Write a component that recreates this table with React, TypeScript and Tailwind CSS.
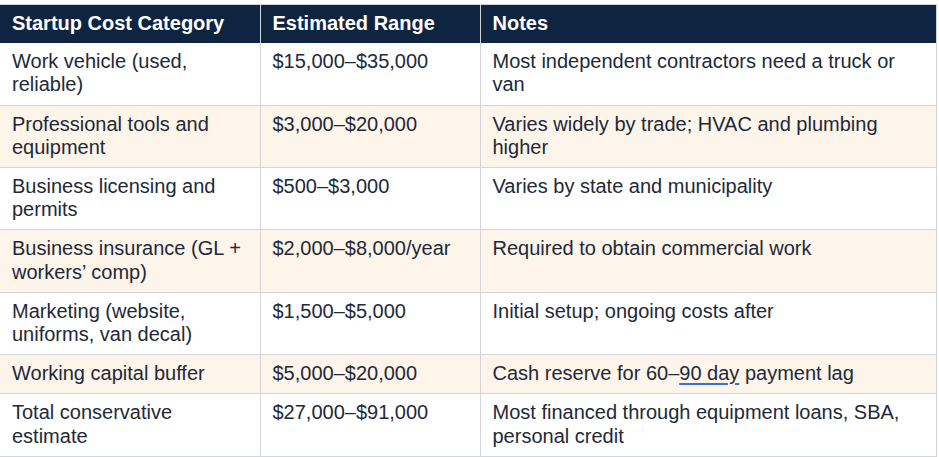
import type React from "react";

type Row = {
  category: string;
  range: string;
  notes: React.ReactNode;
};

const rows: Row[] = [
  {
    category: "Work vehicle (used, reliable)",
    range: "$15,000–$35,000",
    notes: "Most independent contractors need a truck or van",
  },
  {
    category: "Professional tools and equipment",
    range: "$3,000–$20,000",
    notes: "Varies widely by trade; HVAC and plumbing higher",
  },
  {
    category: "Business licensing and permits",
    range: "$500–$3,000",
    notes: "Varies by state and municipality",
  },
  {
    category: "Business insurance (GL + workers’ comp)",
    range: "$2,000–$8,000/year",
    notes: "Required to obtain commercial work",
  },
  {
    category: "Marketing (website, uniforms, van decal)",
    range: "$1,500–$5,000",
    notes: "Initial setup; ongoing costs after",
  },
  {
    category: "Working capital buffer",
    range: "$5,000–$20,000",
    notes: (
      <>
        Cash reserve for 60–
        <span className="underline decoration-[#3b6fd8] decoration-[1.5px] underline-offset-[3px]">
          90 day
        </span>{" "}
        payment lag
      </>
    ),
  },
  {
    category: "Total conservative estimate",
    range: "$27,000–$91,000",
    notes: "Most financed through equipment loans, SBA, personal credit",
  },
];

export default function App() {
  return (
    <div className="w-[939px] h-[457px] bg-white pt-[4px] font-['Liberation_Sans',Arial,sans-serif]">
      <table className="table-fixed border-collapse w-[936px] text-[20px] leading-[23.2px] text-[#222938]">
        <colgroup>
          <col className="w-[260px]" />
          <col className="w-[220px]" />
          <col className="w-[456px]" />
        </colgroup>
        <thead>
          <tr className="bg-[#0f2441] text-white font-bold text-left">
            <th className="border-t border-r border-[#d3d5da] px-3 pt-[7px] pb-[8px] font-bold">
              Startup Cost Category
            </th>
            <th className="border-t border-r border-[#d3d5da] px-3 pt-[7px] pb-[8px] font-bold">
              Estimated Range
            </th>
            <th className="border-t border-r border-[#d3d5da] px-3 pt-[7px] pb-[8px] font-bold">
              Notes
            </th>
          </tr>
        </thead>
        <tbody>
          {rows.map((r, i) => (
            <tr key={i} className={i % 2 === 1 ? "bg-[#fdf4ea]" : "bg-white"}>
              <td className="border-b border-r border-[#d3d5da] px-3 pt-[7px] pb-[8px] align-top">
                {r.category}
              </td>
              <td className="border-b border-r border-[#d3d5da] px-3 pt-[7px] pb-[8px] align-top">
                {r.range}
              </td>
              <td className="border-b border-r border-[#d3d5da] px-3 pt-[7px] pb-[8px] align-top">
                {r.notes}
              </td>
            </tr>
          ))}
        </tbody>
      </table>
    </div>
  );
}
